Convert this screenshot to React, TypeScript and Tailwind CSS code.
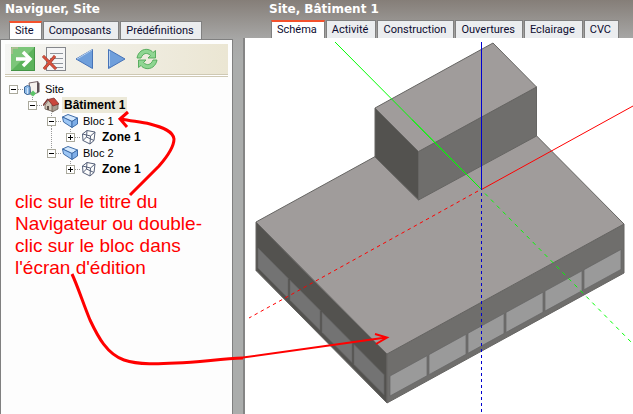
import React, { useState } from "react";

interface TabBarProps {
  tabs: string[];
  label: string;
}

interface TreeNode {
  id: string;
  label: string;
  icon: "site" | "building" | "block" | "zone";
  level: number;
  bold?: boolean;
  open?: boolean;
  last?: boolean;
  guide?: boolean;
}

const nodes: TreeNode[] = [
  { id: "site", label: "Site", icon: "site", level: 0, open: true, last: true },
  { id: "bat1", label: "Bâtiment 1", icon: "building", level: 1, bold: true, open: true, last: true },
  { id: "bloc1", label: "Bloc 1", icon: "block", level: 2, open: true },
  { id: "zone1", label: "Zone 1", icon: "zone", level: 3, bold: true, last: true, guide: true },
  { id: "bloc2", label: "Bloc 2", icon: "block", level: 2, open: true, last: true },
  { id: "zone2", label: "Zone 1", icon: "zone", level: 3, bold: true, last: true },
];

const TabBar: React.FC<TabBarProps> = ({ tabs, label }) => {
  const [active, setActive] = useState(tabs[0]);

  return (
    <div role="tablist" aria-label={label} className="flex gap-px">
      {tabs.map((tab) => (
        <button
          key={tab}
          role="tab"
          aria-selected={tab === active}
          onClick={() => setActive(tab)}
          className={`h-[18px] whitespace-nowrap border-r border-l border-[#808080] pr-[7px] pl-[5px] text-[11px] leading-4 text-[#0c0c30] ${
            tab === active
              ? "border-t-2 border-t-[#f4512c] bg-white"
              : "border-t bg-[#ebedef]"
          }`}
        >
          {tab}
        </button>
      ))}
    </div>
  );
};

// Icônes de la barre d'outils
const GoIcon = () => (
  <svg width="24" height="24" viewBox="0 0 24 24">
    <rect width="24" height="24" fill="#5cb35c" />
    <path d="M0 0h24L0 24z" fill="#7cc67a" />
    <path d="M1 7V1h6" fill="none" stroke="#d4b8a4" />
    <path d="M23.500 0v23.500H0" fill="none" stroke="#449446" />
    <path d="M5 12h13M12 5l7 7-7 7" fill="none" stroke="#fff" strokeWidth="3.500" />
  </svg>
);

const DeleteIcon = () => (
  <svg width="24" height="24" viewBox="0 0 24 24">
    <rect x="4.500" y=".5" width="19" height="23" fill="#f5f5f6" stroke="#85878c" />
    <path d="M8 6.500h13M8 11.500h13M10 16.500h11M14 20.500h7" stroke="#8f949c" />
    <path d="M1 9l13 13M13 9L2 22" stroke="#8f3a32" strokeWidth="3" />
    <path d="M1 9l13 13M13 9L2 22" stroke="#d8503c" strokeWidth="2" />
  </svg>
);

const PreviousIcon = () => (
  <svg width="24" height="24" viewBox="0 0 24 24">
    <path d="M19.500 2.500v19L3 12z" fill="#6f9fdb" stroke="#4673b8" />
    <path d="M19 3L4 12" stroke="#b9d2f0" />
  </svg>
);

const NextIcon = () => (
  <svg width="24" height="24" viewBox="0 0 24 24">
    <path d="M4.500 2.500v19L21 12z" fill="#6f9fdb" stroke="#4673b8" />
    <path d="M5.500 4v15" stroke="#b9d2f0" />
  </svg>
);

const RefreshIcon = () => (
  <svg width="24" height="24" viewBox="0 0 24 24">
    <g fill="#8fd692" stroke="#4fa757" strokeWidth=".9">
      <path d="M2 11C3 5 8 1.500 13 2.500c2 .4 4 1.500 5 3l2.500-2V11H13l2.500-2.500C12 5 8 6 6 11z" />
      <path d="M22 13c-1 6-6 9.500-11 8.500-2-.4-4-1.500-5-3l-2.500 2V13H11l-2.500 2.500C12 19 16 18 18 13z" />
    </g>
  </svg>
);

const tools = [
  { name: "Ouvrir", Icon: GoIcon },
  { name: "Supprimer", Icon: DeleteIcon },
  { name: "Précédent", Icon: PreviousIcon },
  { name: "Suivant", Icon: NextIcon },
  { name: "Actualiser", Icon: RefreshIcon },
];

const NodeIcon = ({ icon }: { icon: TreeNode["icon"] }) => (
  <svg width="16" height="16" viewBox="0 0 16 16" className="shrink-0">
    {icon === "site" && (
      <>
        <path d="M5 2l9-1.500v11L7 14z" fill="#f6f2ee" stroke="#77666a" />
        <path d="M13 1l2.500 1v9L13 12z" fill="#5d5055" />
        <path d="M.5 6l3-1.500 2.500 1V13l-3 .5L.5 12z" fill="#8fbbe8" stroke="#3b6597" />
        <path d="M3.500 7v6" stroke="#d3e6fa" />
        <path d="M9 9.500l3 3-3 3-3-3z" fill="#5cc468" />
      </>
    )}
    {icon === "building" && (
      <>
        <path d="M2 8l4-5 4 5v6.500L2 12z" fill="#cfc4b6" stroke="#64584f" strokeWidth=".8" />
        <path d="M9 8l6-1v5l-6 3z" fill="#a79c90" stroke="#64584f" strokeWidth=".8" />
        <path d="M5 2.500L11 1l5 6-6 2z" fill="#c9463d" stroke="#7a3430" strokeWidth=".8" />
        <path d="M5 2L0 8.500" stroke="#7a3430" strokeWidth="1.500" />
        <path d="M4 9h2v4H4z" fill="#5e5048" />
      </>
    )}
    {icon === "block" && (
      <g stroke="#3f6da8" strokeLinejoin="round">
        <path d="M.5 4L6 1.500 15.500 5 10 8.500z" fill="#d3e8fd" />
        <path d="M.5 4L10 8.500V14.500L1.500 9z" fill="#9cc6f5" />
        <path d="M10 8.500l5.500-3.500v6L10 14.500z" fill="#7eaee8" />
      </g>
    )}
    {icon === "zone" && (
      <g fill="none" stroke="#56617a" strokeLinejoin="round">
        <path d="M1.500 5L6 1.500 14 3l-1 8.500L9 15l-7-3.500zM1.500 5L9.500 7 14 3M9.500 7L9 15M6 1.500L5.500 8 2 11.500M5.500 8l7.500 3.500" />
      </g>
    )}
  </svg>
);

const TreeRow = ({ node }: { node: TreeNode }) => {
  const [open, setOpen] = useState(!!node.open);

  return (
    <li role="treeitem" aria-expanded={open} className="flex h-4 items-center">
      {Array.from({ length: node.level }, (_, i) => (
        <svg key={i} width="19" height="16" className="shrink-0">
          {node.guide && i === 2 && (
            <path d="M4.500 0v16" stroke="#999" strokeDasharray="1 1" />
          )}
        </svg>
      ))}
      <button aria-label={node.label} onClick={() => setOpen(!open)} className="shrink-0">
        <svg width="15" height="16" viewBox="0 0 15 16" className="block">
          <path
            d={`M9 8.500h6${node.level ? "M4.500 0v4" : ""}${node.last ? "" : "M4.500 13v3"}`}
            stroke="#999"
            strokeDasharray="1 1"
          />
          <rect x=".5" y="4.500" width="8" height="8" fill="#fff" stroke="#aaa99c" />
          <path d={open ? "M2 8.500h5" : "M2 8.500h5M4.500 6v5"} stroke="#000" />
        </svg>
      </button>
      <NodeIcon icon={node.icon} />
      <span
        className={`ml-[3px] px-0.5 leading-4 ${
          node.bold ? "text-xs font-bold" : "text-[11px]"
        } ${node.id === "bat1" ? "bg-[#ece9d8]" : ""}`}
      >
        {node.label}
      </span>
    </li>
  );
};

// Baies vitrées des deux façades, entre chaque montant
const leftBays = [258, 289, 321, 353, 385];
const rightBays = [390, 428, 467, 505, 544, 583, 622];

const bayPoints = (bays: number[], i: number, y: number, slope: number) => {
  const a = bays[i] + (i ? 1 : 0);
  const b = bays[i + 1] - 1;
  const ya = y + (a - bays[0]) * slope;
  const yb = y + (b - bays[0]) * slope;
  return `${a},${ya} ${b},${yb} ${b},${yb + 20} ${a},${ya + 20}`;
};

const Model = () => (
  <svg width="388" height="376" viewBox="245 38 388 376" className="block" role="img" aria-label="Bâtiment 1">
    <g strokeLinejoin="round" stroke="#666563">
      <path d="M256 222L387 354V403L256 270.500z" fill="#53524f" />
      <path d="M387 354L624 224V273L387 403z" fill="#6f6e6c" />
      <path d="M256 222L438 122L493 92L624 224L387 354z" fill="#a09c9b" />
    </g>
    {leftBays.slice(1).map((x, i) => (
      <polygon key={x} points={bayPoints(leftBays, i, 248, 1.005)} fill="#737373" stroke="#646464" strokeWidth=".7" />
    ))}
    {rightBays.slice(1).map((x, i) => (
      <polygon key={x} points={bayPoints(rightBays, i, 376, -0.548)} fill="#9a9a9a" stroke="#646464" strokeWidth=".7" />
    ))}
    <g strokeLinejoin="round" stroke="#666563">
      <path d="M375 108L418.500 151.500V200L375 157z" fill="#53524f" />
      <path d="M418.500 151.500L536.500 87V136L418.500 200z" fill="#6f6e6c" />
      <path d="M375 108L493 43L536.500 87L418.500 151.500z" fill="#a09c9b" />
    </g>
    <g fill="none" strokeWidth="1">
      <path d="M335 42L481 189" stroke="#0f0" />
      <path d="M412 119.500L481 189" stroke="#0f0" />
      <path d="M485 193.500L633 344" stroke="#0f0" strokeDasharray="4 4.500" />
      <path d="M481.500 189.500L633 106" stroke="#f00" />
      <path d="M478 191L249 318" stroke="#f00" strokeDasharray="3.500 3.500" />
      <path d="M481.500 42V190" stroke="#0000d0" />
      <path d="M481.500 193V414" stroke="#0000d0" strokeDasharray="3 3" />
    </g>
  </svg>
);

const Arrows = () => (
  <svg
    width="633"
    height="414"
    viewBox="0 0 633 414"
    aria-hidden="true"
    className="pointer-events-none absolute top-0 left-0"
    fill="none"
    stroke="#f00"
  >
    <path
      d="M130 195L159 166C166 158 174 147 174 139C173 131 162 127 150 124C141 122 131 121 121 119M128 112L120 119L127 127"
      strokeWidth="3"
    />
    <path
      d="M72 274C78 287 83 303 90 320C98 337 107 354 124 360C139 365 159 364 176 363C200 362 220 359 243 358"
      strokeWidth="3"
    />
    <path d="M243 357.500L386 337.500M375 334L387 337.500L376 344" strokeWidth="2" />
  </svg>
);

export default function App() {
  return (
    <div className="relative flex min-h-screen overflow-hidden bg-[#abadac] bg-[linear-gradient(#857e78,#a8a8a7_40px,#abadac_60px)] font-['Liberation_Sans',sans-serif] text-black">
      <aside className="flex w-[233px] shrink-0 flex-col">
        <h2 className="h-[21px] pl-[5px] font-['DejaVu_Sans',sans-serif] text-xs leading-[18px] font-bold text-white">
          Naviguer, Site
        </h2>
        <div className="pl-[9px] font-['Roboto',sans-serif]">
          <TabBar label="Navigateur" tabs={["Site", "Composants", "Prédéfinitions"]} />
        </div>
        <div className="flex-1 border border-b-0 border-[#808080] bg-[#fdfdfd] px-1 pt-1">
          <div className="flex h-[30px] items-center bg-linear-to-r from-[#f5f5f3] to-[#ebe6d3] pl-[6px]">
            {tools.map(({ name, Icon }) => (
              <button key={name} aria-label={name} className="w-[31px]">
                <Icon />
              </button>
            ))}
          </div>
          <div className="h-[3px] border-t border-b border-[#cfc9b4] bg-white" />
          <ul role="tree" className="mt-1 pl-1">
            {nodes.map((node) => (
              <TreeRow key={node.id} node={node} />
            ))}
          </ul>
          <p className="mt-[14px] w-[200px] pl-[10px] text-[19px] leading-[22px] whitespace-nowrap text-[#f00]">
            clic sur le titre du
            <br />
            Navigateur ou double-
            <br />
            clic sur le bloc dans
            <br />
            l'écran d'édition
          </p>
        </div>
      </aside>
      <main className="ml-[10px] flex min-w-0 flex-1 flex-col">
        <h2 className="h-5 pl-[26px] font-['DejaVu_Sans',sans-serif] text-xs leading-[18px] font-bold text-white">
          Site, Bâtiment 1
        </h2>
        <div className="pl-7 font-['Roboto',sans-serif]">
          <TabBar
            label="Bâtiment"
            tabs={["Schéma", "Activité", "Construction", "Ouvertures", "Eclairage", "CVC"]}
          />
        </div>
        <div className="flex-1 border-l-2 border-[#858585] bg-white">
          <Model />
        </div>
      </main>
      <Arrows />
    </div>
  );
}
